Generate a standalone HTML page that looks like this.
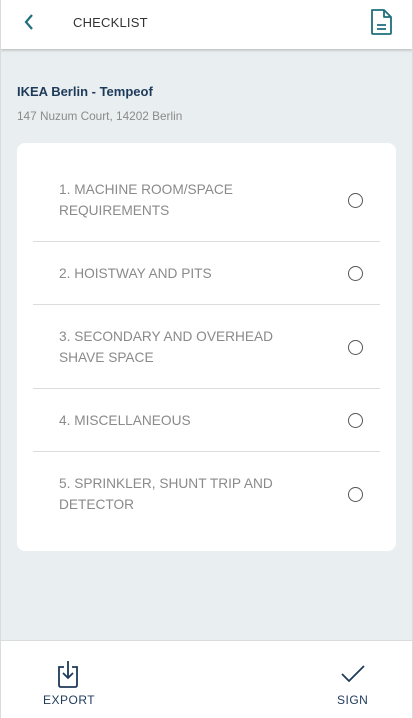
<!DOCTYPE html>
<html><head><style>
*{margin:0;padding:0;box-sizing:border-box}
body{width:413px;height:718px;background:#e9eff0;font-family:"Liberation Sans",sans-serif;position:relative;overflow:hidden}
.bl{position:absolute;top:0;width:1px;height:718px;background:#d8dcdd;z-index:5}
.hdr{position:absolute;left:0;top:0;width:413px;height:49px;background:#fff;box-shadow:0 1px 3px rgba(0,0,0,.25)}
.title{position:absolute;left:73px;top:15px;font-size:13px;color:#333;letter-spacing:.2px}
.name{position:absolute;left:17px;top:84px;font-size:13px;font-weight:bold;color:#1e3a5a}
.addr{position:absolute;left:17px;top:109px;font-size:11.8px;color:#8a8a8a}
.card{position:absolute;left:17px;top:143px;width:379px;height:408px;background:#fff;border-radius:8px}
.row{position:absolute;left:16px;width:347px;border-bottom:1px solid #dcdcdc}
.row span{position:absolute;left:26px;font-size:13.7px;color:#8a8a8a;line-height:21px}
.row i{position:absolute;left:315px;width:15px;height:15px;border:1.5px solid #555;border-radius:50%}
.ftr{position:absolute;left:0;top:640px;width:413px;height:78px;background:#fff;border-top:1px solid #d8dcdd}
.fl{position:absolute;top:52px;font-size:12px;color:#1e3a5a;letter-spacing:.5px}
</style></head><body>
<div class="hdr">
<svg style="position:absolute;left:22px;top:13px" width="14" height="18" viewBox="0 0 14 18"><path d="M10 2 L4 9 L10 16" fill="none" stroke="#1f6f7c" stroke-width="2.2"/></svg>
<div class="title">CHECKLIST</div>
<svg style="position:absolute;left:369px;top:8px" width="24" height="28" viewBox="0 0 24 28"><path d="M3 2 H15 L22 9 V25 Q22 26 21 26 H4 Q3 26 3 25 Z M15 2 V9 H22 M8 17 H17 M8 21 H17" fill="none" stroke="#1f6f7c" stroke-width="1.8" stroke-linejoin="round"/></svg>
</div>
<div class="name">IKEA Berlin - Tempeof</div>
<div class="addr">147 Nuzum Court, 14202 Berlin</div>
<div class="card">
<div class="row" style="top:19px;height:80px"><span style="top:17px">1. MACHINE ROOM/SPACE<br>REQUIREMENTS</span><i style="top:31px"></i></div>
<div class="row" style="top:99px;height:63px"><span style="top:21px">2. HOISTWAY AND PITS</span><i style="top:24px"></i></div>
<div class="row" style="top:162px;height:84px"><span style="top:21px">3. SECONDARY AND OVERHEAD<br>SHAVE SPACE</span><i style="top:35px"></i></div>
<div class="row" style="top:246px;height:63px"><span style="top:21px">4. MISCELLANEOUS</span><i style="top:24px"></i></div>
<div class="row" style="top:309px;height:84px;border:none"><span style="top:21px">5. SPRINKLER, SHUNT TRIP AND<br>DETECTOR</span><i style="top:35px"></i></div>
</div>
<div class="ftr">
<svg style="position:absolute;left:56px;top:20px" width="24" height="28" viewBox="0 0 24 28"><path d="M8 6 H3 V24 Q3 26 5 26 H19 Q21 26 21 24 V6 H16 M12 0 V17 M7 12 L12 17 L17 12" fill="none" stroke="#1e3a5a" stroke-width="1.8"/></svg>
<div class="fl" style="left:43px">EXPORT</div>
<svg style="position:absolute;left:340px;top:23px" width="26" height="20" viewBox="0 0 26 20"><path d="M2 10 L9 17 L24 2" fill="none" stroke="#1e3a5a" stroke-width="1.8"/></svg>
<div class="fl" style="left:337px">SIGN</div>
</div>
<div class="bl" style="left:0"></div><div class="bl" style="right:0"></div>
</body></html>
